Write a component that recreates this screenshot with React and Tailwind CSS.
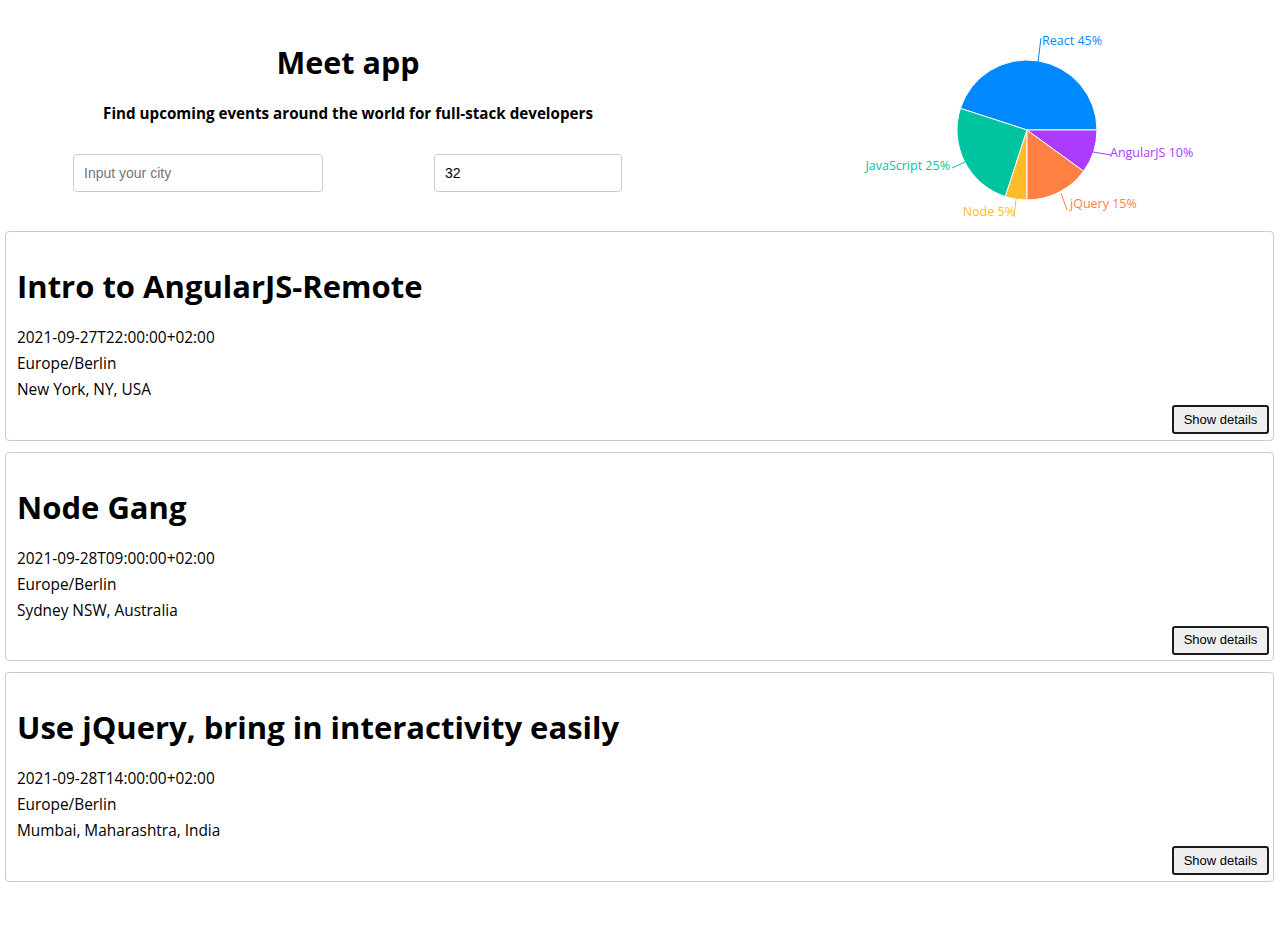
import React from 'react';

const font = { fontFamily: '"Open Sans", "Noto Sans", sans-serif' };

const slices = [
  { name: 'React', value: 45, color: '#0088FE' },
  { name: 'JavaScript', value: 25, color: '#00C49F' },
  { name: 'Node', value: 5, color: '#FFBB28' },
  { name: 'jQuery', value: 15, color: '#FF8042' },
  { name: 'AngularJS', value: 10, color: '#AA3BFF' },
];

// label spots, taken from the screenshot (svg coords, svg starts at x=696)
const labels = [
  { x: 346, y: 45, anchor: 'start', line: [342, 62, 345, 38] },
  { x: 254, y: 170, anchor: 'end', line: [269, 162, 256, 168] },
  { x: 319, y: 216, anchor: 'end', line: [320, 199, 318, 217] },
  { x: 374, y: 208, anchor: 'start', line: [365, 193, 371, 210] },
  { x: 414, y: 157, anchor: 'start', line: [397, 152, 415, 155] },
];

const events = [
  {
    summary: 'Intro to AngularJS-Remote',
    start: '2021-09-27T22:00:00+02:00',
    timeZone: 'Europe/Berlin',
    location: 'New York, NY, USA',
  },
  {
    summary: 'Node Gang',
    start: '2021-09-28T09:00:00+02:00',
    timeZone: 'Europe/Berlin',
    location: 'Sydney NSW, Australia',
  },
  {
    summary: 'Use jQuery, bring in interactivity easily',
    start: '2021-09-28T14:00:00+02:00',
    timeZone: 'Europe/Berlin',
    location: 'Mumbai, Maharashtra, India',
  },
];

const PieChart = () => {
  const cx = 331;
  const cy = 130;
  const r = 70;
  const pt = (deg) => {
    const a = (deg * Math.PI) / 180;
    return [cx + r * Math.cos(a), cy - r * Math.sin(a)];
  };
  let angle = 0;
  const paths = slices.map((s) => {
    const sweep = (s.value / 100) * 360;
    const [x1, y1] = pt(angle);
    const [x2, y2] = pt(angle + sweep);
    angle += sweep;
    const large = sweep > 180 ? 1 : 0;
    return {
      ...s,
      d: `M${cx},${cy} L${x1},${y1} A${r},${r} 0 ${large} 0 ${x2},${y2} Z`,
    };
  });

  return (
    <svg width="584" height="225" viewBox="0 0 584 225">
      {paths.map((p) => (
        <path key={p.name} d={p.d} fill={p.color} stroke="#fff" strokeWidth="1" />
      ))}
      {paths.map((p, i) => {
        const l = labels[i];
        return (
          <g key={p.name + '-label'}>
            <polyline
              points={`${l.line[0]},${l.line[1]} ${l.line[2]},${l.line[3]}`}
              stroke={p.color}
              fill="none"
              strokeWidth="1"
            />
            <text
              x={l.x}
              y={l.y}
              textAnchor={l.anchor}
              fill={p.color}
              fontSize="12.5"
              style={font}
            >
              {p.name} {p.value}%
            </text>
          </g>
        );
      })}
    </svg>
  );
};

const Event = ({ event }) => (
  <div className="h-[209.5px] rounded-[4px] border border-[#cccccc] pl-[11px] pr-[4px] pt-[34px] flex flex-col">
    <h1 className="text-[31px] font-bold leading-[40px] text-black">{event.summary}</h1>
    <div className="mt-[19px] text-[15.4px] leading-[26px] text-black">
      <p>{event.start}</p>
      <p>{event.timeZone}</p>
      <p>{event.location}</p>
    </div>
    <div className="mt-[2px] flex justify-end">
      <button
        className="h-[29px] w-[97px] rounded-[3px] border-2 border-[#1a1a1a] bg-[#efefef] text-[13px] text-black"
        style={{ fontFamily: '"Liberation Sans", Arial, sans-serif' }}
      >
        Show details
      </button>
    </div>
  </div>
);

export default function App() {
  return (
    <div className="min-h-[930px] bg-white" style={font}>
      <div className="flex h-[225px]">
        <div className="w-[696px] flex flex-col">
          <h1 className="mt-[42px] text-center text-[30.5px] font-bold leading-[40px] text-black">
            Meet app
          </h1>
          <h4 className="mt-[20px] text-center text-[15.2px] font-bold leading-[22px] text-black">
            Find upcoming events around the world for full-stack developers
          </h4>
          <div className="mt-[30px] flex pl-[73px] gap-[111px]">
            <input
              type="text"
              placeholder="Input your city"
              className="h-[38px] w-[250px] rounded-[4px] border border-[#cccccc] px-[10px] text-[14px] text-black placeholder:text-[#757575] outline-none"
              style={{ fontFamily: '"Liberation Sans", Arial, sans-serif' }}
            />
            <input
              type="number"
              defaultValue="32"
              className="h-[38px] w-[188px] rounded-[4px] border border-[#cccccc] px-[10px] text-[14px] text-black outline-none"
              style={{ fontFamily: '"Liberation Sans", Arial, sans-serif' }}
            />
          </div>
        </div>
        <PieChart />
      </div>
      <div className="mt-[6px] flex flex-col gap-[11px] pl-[5px] pr-[6px]">
        {events.map((e) => (
          <Event key={e.summary} event={e} />
        ))}
      </div>
    </div>
  );
}
